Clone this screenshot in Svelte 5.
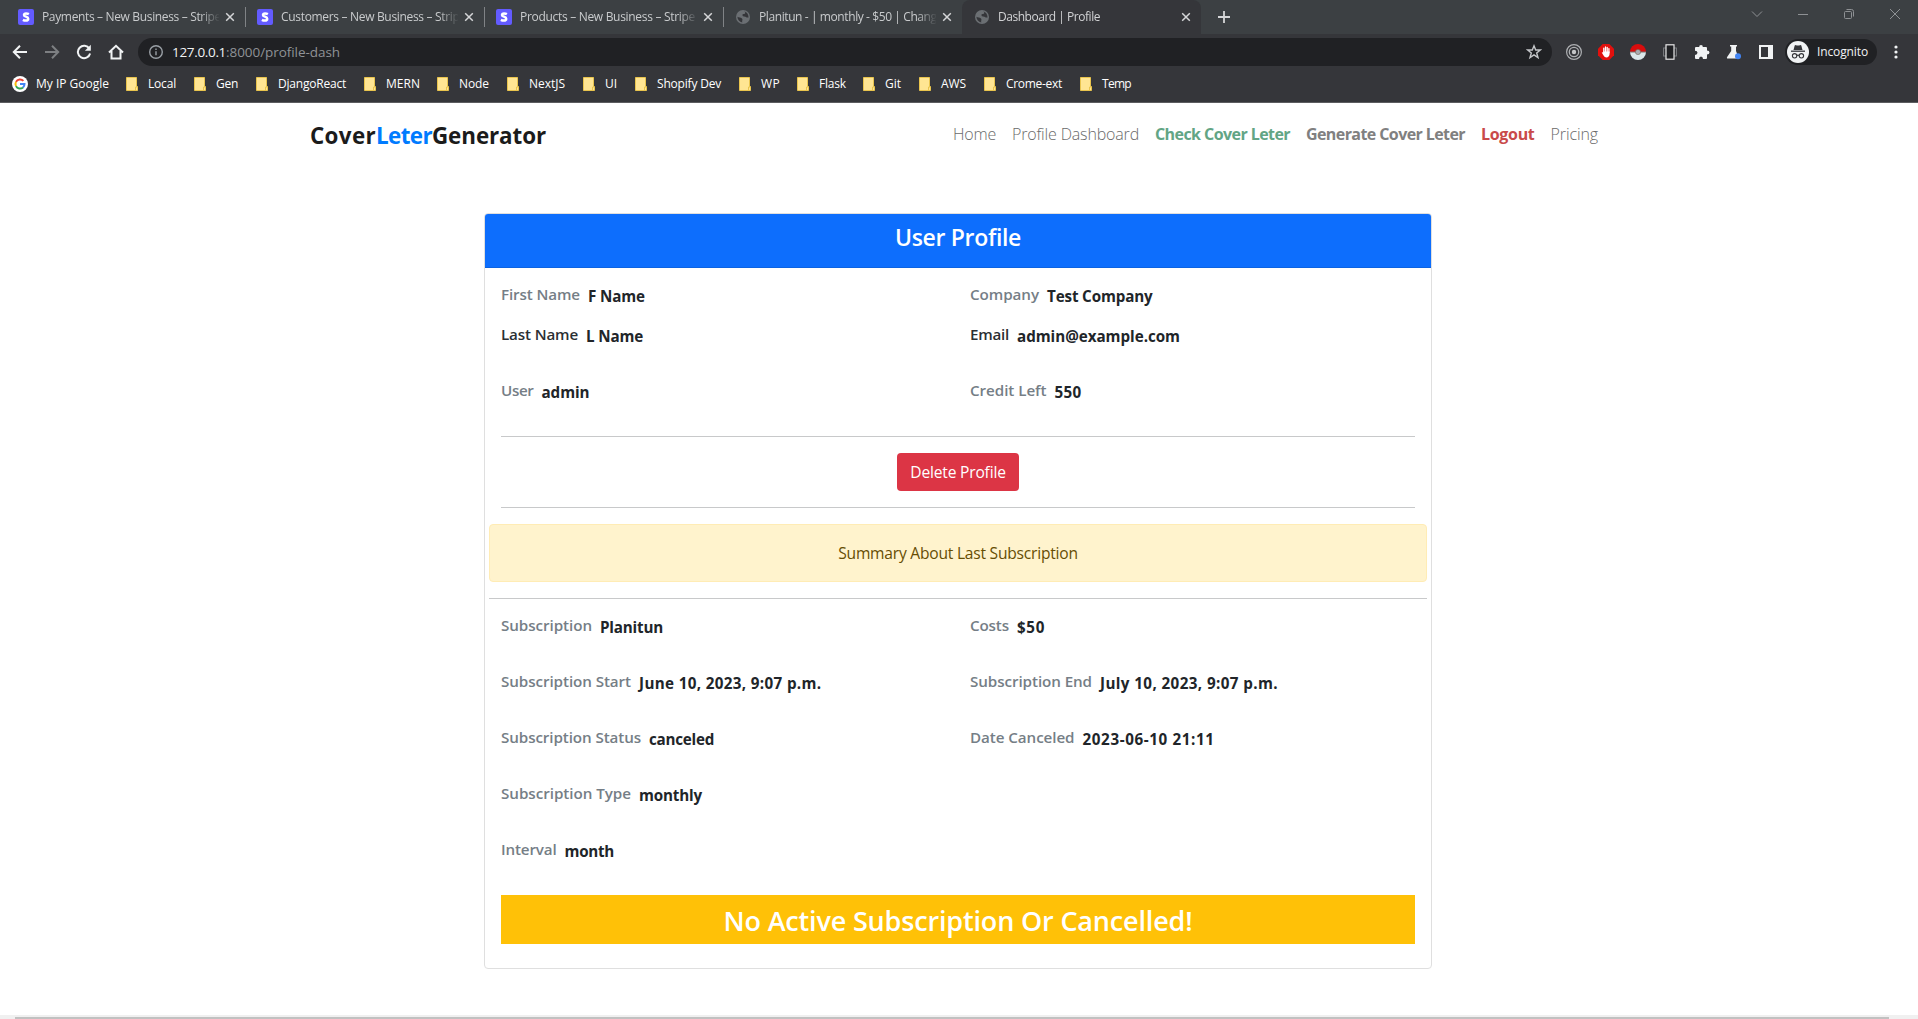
<script>
  // Tightens or loosens tracking so that a run of text takes the given width.
  function fit(node, width) {
    const natural = node.getBoundingClientRect().width;
    const spacing = (width - natural) / node.textContent.length;
    node.style.letterSpacing = `${spacing.toFixed(3)}px`;
  }

  const tabs = [
    { icon: 'stripe', title: 'Payments – New Business – Stripe', w: 179 },
    { icon: 'stripe', title: 'Customers – New Business – Stripe', w: 185 },
    { icon: 'stripe', title: 'Products – New Business – Stripe', w: 175 },
    { icon: 'globe', title: 'Planitun - | monthly - $50 | Change', w: 184 },
    { icon: 'globe', title: 'Dashboard | Profile', w: 102, active: true }
  ];

  const bookmarks = [
    { name: 'Local', w: 28, box: 46 },
    { name: 'Gen', w: 22, box: 40 },
    { name: 'DjangoReact', w: 68, box: 86 },
    { name: 'MERN', w: 34, box: 51 },
    { name: 'Node', w: 30, box: 48 },
    { name: 'NextJS', w: 36, box: 54 },
    { name: 'UI', w: 12, box: 30 },
    { name: 'Shopify Dev', w: 64, box: 82 },
    { name: 'WP', w: 19, box: 36 },
    { name: 'Flask', w: 27, box: 44 },
    { name: 'Git', w: 16, box: 34 },
    { name: 'AWS', w: 25, box: 43 },
    { name: 'Crome-ext', w: 56, box: 74 },
    { name: 'Temp', w: 29, box: 46 }
  ];

  const links = [
    { text: 'Home', w: 43 },
    { text: 'Profile Dashboard', w: 127 },
    { text: 'Check Cover Leter', w: 135, kind: 'check' },
    { text: 'Generate Cover Leter', w: 159, kind: 'strong' },
    { text: 'Logout', w: 53.5, kind: 'logout' },
    { text: 'Pricing', w: 47.5 }
  ];

  const profile = [
    [{ k: 'First Name', kw: 79, v: 'F Name', vw: 57 }, { k: 'Company', kw: 69, v: 'Test Company', vw: 105.5 }],
    [{ k: 'Last Name', kw: 77, v: 'L Name', vw: 57, dark: true }, { k: 'Email', kw: 39, v: 'admin@example.com', vw: 163, dark: true }],
    [{ k: 'User', kw: 32.5, v: 'admin', vw: 48 }, { k: 'Credit Left', kw: 76.5, v: '550', vw: 27 }]
  ];

  const subscription = [
    [{ k: 'Subscription', kw: 91, v: 'Planitun', vw: 63 }, { k: 'Costs', kw: 39, v: '$50', vw: 28 }],
    [{ k: 'Subscription Start', kw: 130, v: 'June 10, 2023, 9:07 p.m.', vw: 182.5 }, { k: 'Subscription End', kw: 122, v: 'July 10, 2023, 9:07 p.m.', vw: 178 }],
    [{ k: 'Subscription Status', kw: 140, v: 'canceled', vw: 65 }, { k: 'Date Canceled', kw: 104.5, v: '2023-06-10 21:11', vw: 132 }],
    [{ k: 'Subscription Type', kw: 130, v: 'monthly', vw: 63 }],
    [{ k: 'Interval', kw: 55.5, v: 'month', vw: 49.5 }]
  ];
</script>

{#snippet row(fields)}
  <div class="row" class:tight={fields[0].k === 'First Name'}>
    {#each fields as f}
      <div class="field">
        <span class="key" class:dark={f.dark}><span use:fit={f.kw}>{f.k}</span></span>
        <span class="value"><span use:fit={f.vw}>{f.v}</span></span>
      </div>
    {/each}
  </div>
{/snippet}

<div class="window">
  <header class="chrome">
    <div class="strip">
      <div class="tabs">
        {#each tabs as tab, i}
          <div class="tab" class:active={tab.active} class:divided={i > 0 && i < 4}>
            {#if tab.icon === 'stripe'}
              <svg class="fav" viewBox="0 0 16 16"><rect width="16" height="16" rx="2" fill="#635bff" /><path d="M10.900 5.100C10 4.600 9 4.400 8 4.400C6.900 4.400 6 4.800 6 5.900C6 8 10.200 7.300 10.200 9.700C10.200 11 9.200 11.600 7.800 11.600C6.800 11.600 5.800 11.300 4.900 10.800" fill="none" stroke="#fff" stroke-width="2.500" /></svg>
            {:else}
              <svg class="fav globe" viewBox="0 0 16 16"><circle cx="7" cy="8" r="7" fill="#6b6f73" /><path d="M8.200 2.300C10 3.500 9.500 5 7.500 5.100C6.200 5.200 6.200 6.600 7 7.200C8.500 7.500 10.300 7.600 10.500 8.500L12.600 8.500C12.300 5.200 11.200 3.200 8.200 2.300ZM1.400 7.800C3 9 4.500 8.200 6 9.500C7.200 10.500 5.700 11.400 6.300 13.600C3.500 13 1.500 10.800 1.400 7.800Z" fill="#35363a" /></svg>
            {/if}
            <div class="title"><span use:fit={tab.w}>{tab.title}</span></div>
            <svg class="close" viewBox="0 0 10 10"><path d="M1.200 1.200L8.800 8.800M8.800 1.200L1.200 8.800" /></svg>
          </div>
        {/each}
      </div>
      <svg class="plus" viewBox="0 0 12 12"><path d="M6 0V12M0 6H12" /></svg>
      <div class="controls">
        <svg viewBox="0 0 12 12"><path d="M1 3.500L6 8.500L11 3.500" /></svg>
        <svg viewBox="0 0 12 12"><path d="M1 6.500H11" /></svg>
        <svg viewBox="0 0 12 12"><rect x="1.500" y="3.500" width="7" height="7" rx="1" /><path d="M3.500 1.500H8.500Q10.500 1.500 10.500 3.500V8.500" /></svg>
        <svg viewBox="0 0 12 12"><path d="M1 1L11 11M11 1L1 11" /></svg>
      </div>
    </div>

    <div class="toolbar">
      <div class="navs">
        <svg viewBox="0 0 16 16"><path d="M15 8H2M8 1.700L1.800 8L8 14.300" /></svg>
        <svg class="off" viewBox="0 0 16 16"><path d="M1 8H14M8 1.700L14.200 8L8 14.300" /></svg>
        <svg viewBox="0 0 16 16"><path d="M13.400 4.800A6.200 6.200 0 1 0 14.100 9.500" /><path d="M14.800 .8V6.700H8.900Z" fill="#f1f3f4" stroke="none" /></svg>
        <svg viewBox="0 0 16 16"><path d="M1 8.500L8 1.800L15 8.500M3.500 7V14.500H12.500V7" /></svg>
      </div>
      <div class="omnibox">
        <svg class="info" viewBox="0 0 14 14"><circle cx="7" cy="7" r="6.300" /><path d="M7 6.200V10.300M7 3.500V5" /></svg>
        <div class="url"><span class="host" use:fit={54}>127.0.0.1</span><span use:fit={114}>:8000/profile-dash</span></div>
        <svg class="star" viewBox="0 0 16 16"><path d="M8 1.800L9.700 6H14.300L10.700 8.900L12 13.500L8 10.800L4 13.500L5.300 8.900L1.700 6H6.300Z" /></svg>
      </div>
      <div class="extensions">
        <svg viewBox="0 0 16 16"><g fill="none" stroke="#aeb0b3"><circle cx="8" cy="8" r="7.400" stroke-width="1.200" /><circle cx="8" cy="8" r="4.700" stroke-width="1.300" /></g><circle cx="8" cy="8" r="2.200" fill="#c5c6c8" /></svg>
        <svg viewBox="0 0 16 16"><path d="M4.700 0H11.300L16 4.700V11.300L11.300 16H4.700L0 11.300V4.700Z" fill="#e2100d" /><path d="M5.800 8.500V4.200M7.500 8V3M9.200 8V3.300M10.900 8.500V4.600" stroke="#fff" stroke-width="1.300" stroke-linecap="round" /><path d="M5.200 7.500H11.600V10Q11.200 13.400 8.400 13.400Q6.500 13.400 5.700 11.800L3.700 8.600Q4.500 7.600 5.600 9Z" fill="#fff" /></svg>
        <svg viewBox="0 0 16 16"><path d="M0 8A8 8 0 0 1 16 8Z" fill="#d90d0d" /><path d="M0 8A8 8 0 0 0 16 8Z" fill="#dbe8ea" /><path d="M0 8H16" stroke="#78706f" /><circle cx="8" cy="8" r="2.600" fill="#a8adb2" stroke="#765" stroke-width=".6" /></svg>
        <svg viewBox="0 0 16 16"><rect x="1.500" y="4" width="13" height="8" fill="none" stroke="#77797c" /><rect x="4" y=".8" width="8" height="14.400" fill="#202124" stroke="#e8e8e8" stroke-width="1.200" /></svg>
        <svg viewBox="0 0 16 16"><path d="M1 4Q1 3 2 3H5.200Q5 1 7 1Q9 1 8.800 3H12Q13 3 13 4V6.500Q15.500 6.500 15.500 8.500Q15.500 10.500 13 10.500V14Q13 15 12 15H9Q9 12.400 7 12.400Q5 12.400 5 15H2Q1 15 1 14V11Q3.500 10.800 3.500 8.800Q3.500 7 1 6.800Z" fill="#f1f3f4" /></svg>
        <svg viewBox="0 0 16 16"><path d="M4 1H11V2.500H10V7L13 14.500H1.200Q.5 14 1.300 12.700L5.200 7V2.500H4Z" fill="#f1f3f4" /><circle cx="12" cy="12.200" r="3" fill="#4285f4" /></svg>
        <svg viewBox="0 0 16 16"><path d="M1 1H15V15H1ZM3 3V13H10V3Z" fill="#f1f3f4" fill-rule="evenodd" /></svg>
      </div>
      <div class="incognito">
        <svg viewBox="0 0 22 22"><circle cx="11" cy="11" r="11" fill="#f1f3f4" /><path d="M6.500 9L7.700 4.500Q8 3.800 9 4.200Q11 5 13 4.200Q14 3.800 14.300 4.500L15.500 9Z" fill="#35363a" /><path d="M4 10.200H18" stroke="#35363a" stroke-width="1.300" /><g fill="none" stroke="#35363a" stroke-width="1.100"><circle cx="7.600" cy="14.800" r="2.200" /><circle cx="14.400" cy="14.800" r="2.200" /><path d="M9.800 14.500Q11 13.700 12.200 14.500" /></g></svg>
        <span use:fit={51}>Incognito</span>
      </div>
      <svg class="menu" viewBox="0 0 4 16"><circle cx="2" cy="3" r="1.600" /><circle cx="2" cy="8" r="1.600" /><circle cx="2" cy="13" r="1.600" /></svg>
    </div>

    <div class="bookmarks">
      <div class="google">
        <svg viewBox="0 0 16 16"><circle cx="8" cy="8" r="8" fill="#fff" /><g fill="none" stroke-width="2"><path d="M11.400 4.900A4.500 4.500 0 0 0 4 5.900" stroke="#ea4335" /><path d="M4 5.900A4.500 4.500 0 0 0 4 10.100" stroke="#fbbc05" /><path d="M4 10.100A4.500 4.500 0 0 0 11 11.400" stroke="#34a853" /><path d="M11 11.400A4.500 4.500 0 0 0 12.500 8H8" stroke="#4285f4" /></g></svg>
        <span use:fit={73}>My IP Google</span>
      </div>
      {#each bookmarks as b}
        <div class="bookmark">
          <svg viewBox="0 0 12 14"><path d="M.5 .5H10.500V9.500H11.500V13.500H.5Z" fill="#ffe593" stroke="#e9c44d" /><path d="M9.500 13V10H11" fill="none" stroke="#e9c44d" /></svg>
          <div style:width="{b.box}px"><span use:fit={b.w}>{b.name}</span></div>
        </div>
      {/each}
    </div>
  </header>

  <main>
    <nav>
      <div class="brand"><span use:fit={66}>Cover</span><span class="accent" use:fit={56}>Leter</span><span use:fit={114}>Generator</span></div>
      <div class="links">
        {#each links as l}
          <span class="link {l.kind ?? ''}" use:fit={l.w}>{l.text}</span>
        {/each}
      </div>
    </nav>

    <section class="card">
      <h4><span use:fit={126}>User Profile</span></h4>
      <div class="profile">
        {#each profile as fields}{@render row(fields)}{/each}
      </div>
      <div class="danger">
        <button><span use:fit={95.5}>Delete Profile</span></button>
      </div>
      <div class="alert"><span use:fit={239.5}>Summary About Last Subscription</span></div>
      <div class="subscription">
        {#each subscription as fields}{@render row(fields)}{/each}
      </div>
      <h3><span use:fit={469}>No Active Subscription Or Cancelled!</span></h3>
    </section>
  </main>

  <div class="scrollbar"><div class="thumb"></div></div>
</div>

<style>
  :global(body) { margin: 0; overflow: hidden; background: #fff; }
  .window {
    display: flex; flex-direction: column; width: 1918px; height: 1019px; overflow: hidden;
    font-family: "Open Sans", "Noto Sans", sans-serif; font-size: 16px; line-height: 24px; color: #212529;
  }
  .window :global(span) { display: inline-block; white-space: nowrap; }
  svg { display: block; flex: none; }

  .chrome { height: 102px; flex: none; background: #35363a; border-bottom: 1px solid #5c5d60; font-size: 12px; line-height: 16px; }
  .strip { display: flex; align-items: center; height: 34px; background: #3c4043; padding-left: 6px; }
  .tabs { display: flex; height: 34px; }
  .tab { display: flex; align-items: center; box-sizing: border-box; width: 239px; padding-left: 12px; color: #c9cbcd; }
  .divided { background: linear-gradient(#808386, #808386) 0 7px / 1px 20px no-repeat; }
  .active { background: #35363a; border-radius: 8px 8px 0 0; color: #d2d3d5; }
  .fav { width: 16px; height: 16px; }
  .globe { margin-left: 1px; margin-right: -1px; }
  .title { width: 177px; margin-left: 8px; overflow: hidden; mask-image: linear-gradient(90deg, #000 158px, transparent 178px); }
  .close { width: 10px; height: 10px; margin-left: 6px; }
  .close path { stroke: #d5d6d8; stroke-width: 1.5; fill: none; }
  .plus { width: 12px; height: 12px; margin-left: 17px; }
  .plus path { stroke: #d5d6d8; stroke-width: 1.8; }
  .controls { display: flex; gap: 34px; margin: -6px 17px 0 auto; }
  .controls svg { width: 12px; height: 12px; fill: none; stroke: #8e9194; stroke-width: 1; }

  .toolbar { display: flex; align-items: center; height: 36px; }
  .navs { display: flex; gap: 16px; padding-left: 12px; width: 126px; flex: none; }
  .navs svg { width: 16px; height: 16px; fill: none; stroke: #f1f3f4; stroke-width: 2; }
  .navs .off { stroke: #7d7f82; }
  .omnibox { display: flex; align-items: center; box-sizing: border-box; width: 1414px; height: 28px; flex: none; padding: 0 10px 0 11px; border-radius: 14px; background: #202124; }
  .info { width: 14px; height: 14px; fill: none; stroke: #9aa0a6; stroke-width: 1.4; }
  .url { display: flex; margin-left: 9px; font-size: 13.5px; line-height: 20px; color: #8f9296; }
  .host { color: #f1f3f4; }
  .star { width: 16px; height: 16px; margin-left: auto; fill: none; stroke: #c4c6c9; stroke-width: 1.4; }
  .extensions { display: flex; gap: 16px; margin-left: 14px; }
  .extensions svg { width: 16px; height: 16px; }
  .incognito { display: flex; align-items: center; gap: 8px; box-sizing: border-box; width: 92px; height: 26px; margin-left: 11px; padding-left: 2px; border-radius: 13px; background: #202124; color: #f1f3f4; }
  .incognito svg { width: 22px; height: 22px; }
  .menu { width: 4px; height: 16px; margin-left: 17px; fill: #f1f3f4; }

  .bookmarks { display: flex; align-items: center; height: 28px; padding-left: 12px; color: #fff; }
  .google { display: flex; align-items: center; width: 114px; gap: 8px; }
  .google svg { width: 16px; height: 16px; }
  .bookmark { display: flex; align-items: center; gap: 10px; }
  .bookmark svg { width: 12px; height: 14px; }

  main { flex: 1; min-height: 0; }
  nav { display: flex; justify-content: space-between; box-sizing: border-box; height: 110px; padding: 16px 320px 0 310px; }
  .brand { display: flex; height: 32px; padding-top: 1px; line-height: 32px; font-size: 22.4px; font-weight: 700; color: #1b1b1b; }
  .brand .accent { color: #007bff; }
  .links { display: flex; gap: 16px; padding-top: 3px; }
  .link { color: #6a6a6a; font-weight: 300; font-size: 16px; }
  .link.check { color: #62a585; font-weight: 700; }
  .link.strong { color: #808080; font-weight: 700; }
  .link.logout { color: #c94a4a; font-weight: 700; }

  .card { box-sizing: border-box; width: 948px; height: 756px; margin-left: 484px; border: 1px solid #dfdfdf; border-radius: 4px; }
  h4 { box-sizing: border-box; height: 54px; margin: 0; padding-top: 9px; border-bottom: 1px solid #0c63e1; border-radius: 3px 3px 0 0; background: #0d6efd; color: #fff; text-align: center; font-size: 23px; line-height: 29px; font-weight: 600; }
  .profile { box-sizing: border-box; height: 169px; margin: 0 16px; padding-top: 14px; border-bottom: 1px solid #c8c9ca; }
  .row { display: grid; grid-template-columns: 469px 1fr; height: 56px; }
  .row.tight { height: 40px; }
  .field { display: flex; gap: 8px; font-size: 15.2px; }
  .key { color: #757e86; font-weight: 600; }
  .key.dark { color: #2b2f33; }
  .value { padding-top: 2px; font-weight: 700; }
  .danger { display: flex; justify-content: center; box-sizing: border-box; height: 71px; margin: 0 16px; padding-top: 16px; border-bottom: 1px solid #c8c9ca; }
  button { box-sizing: border-box; width: 122px; height: 38px; padding: 0; border: 0; border-radius: 4px; background: #dc3545; color: #fff; font: inherit; font-size: 15.6px; }
  .alert { box-sizing: border-box; height: 58px; margin: 16px 4px; padding-top: 16px; border: 1px solid #ffecb5; border-radius: 4px; background: #fff3cd; color: #664d03; text-align: center; font-size: 15.6px; }
  .subscription { box-sizing: border-box; height: 297px; margin: 0 4px; padding: 14px 12px 0; border-top: 1px solid #c8c9ca; }
  h3 { height: 49px; margin: 0 16px; background: #ffc107; color: #fff; text-align: center; font-size: 27px; line-height: 52px; font-weight: 600; }

  .scrollbar { height: 4px; flex: none; background: #f0f0f0; padding-left: 15px; }
  .thumb { width: 1874px; height: 2px; border-top: 2px solid #f0f0f0; background: #c1c1c1; }
</style>
